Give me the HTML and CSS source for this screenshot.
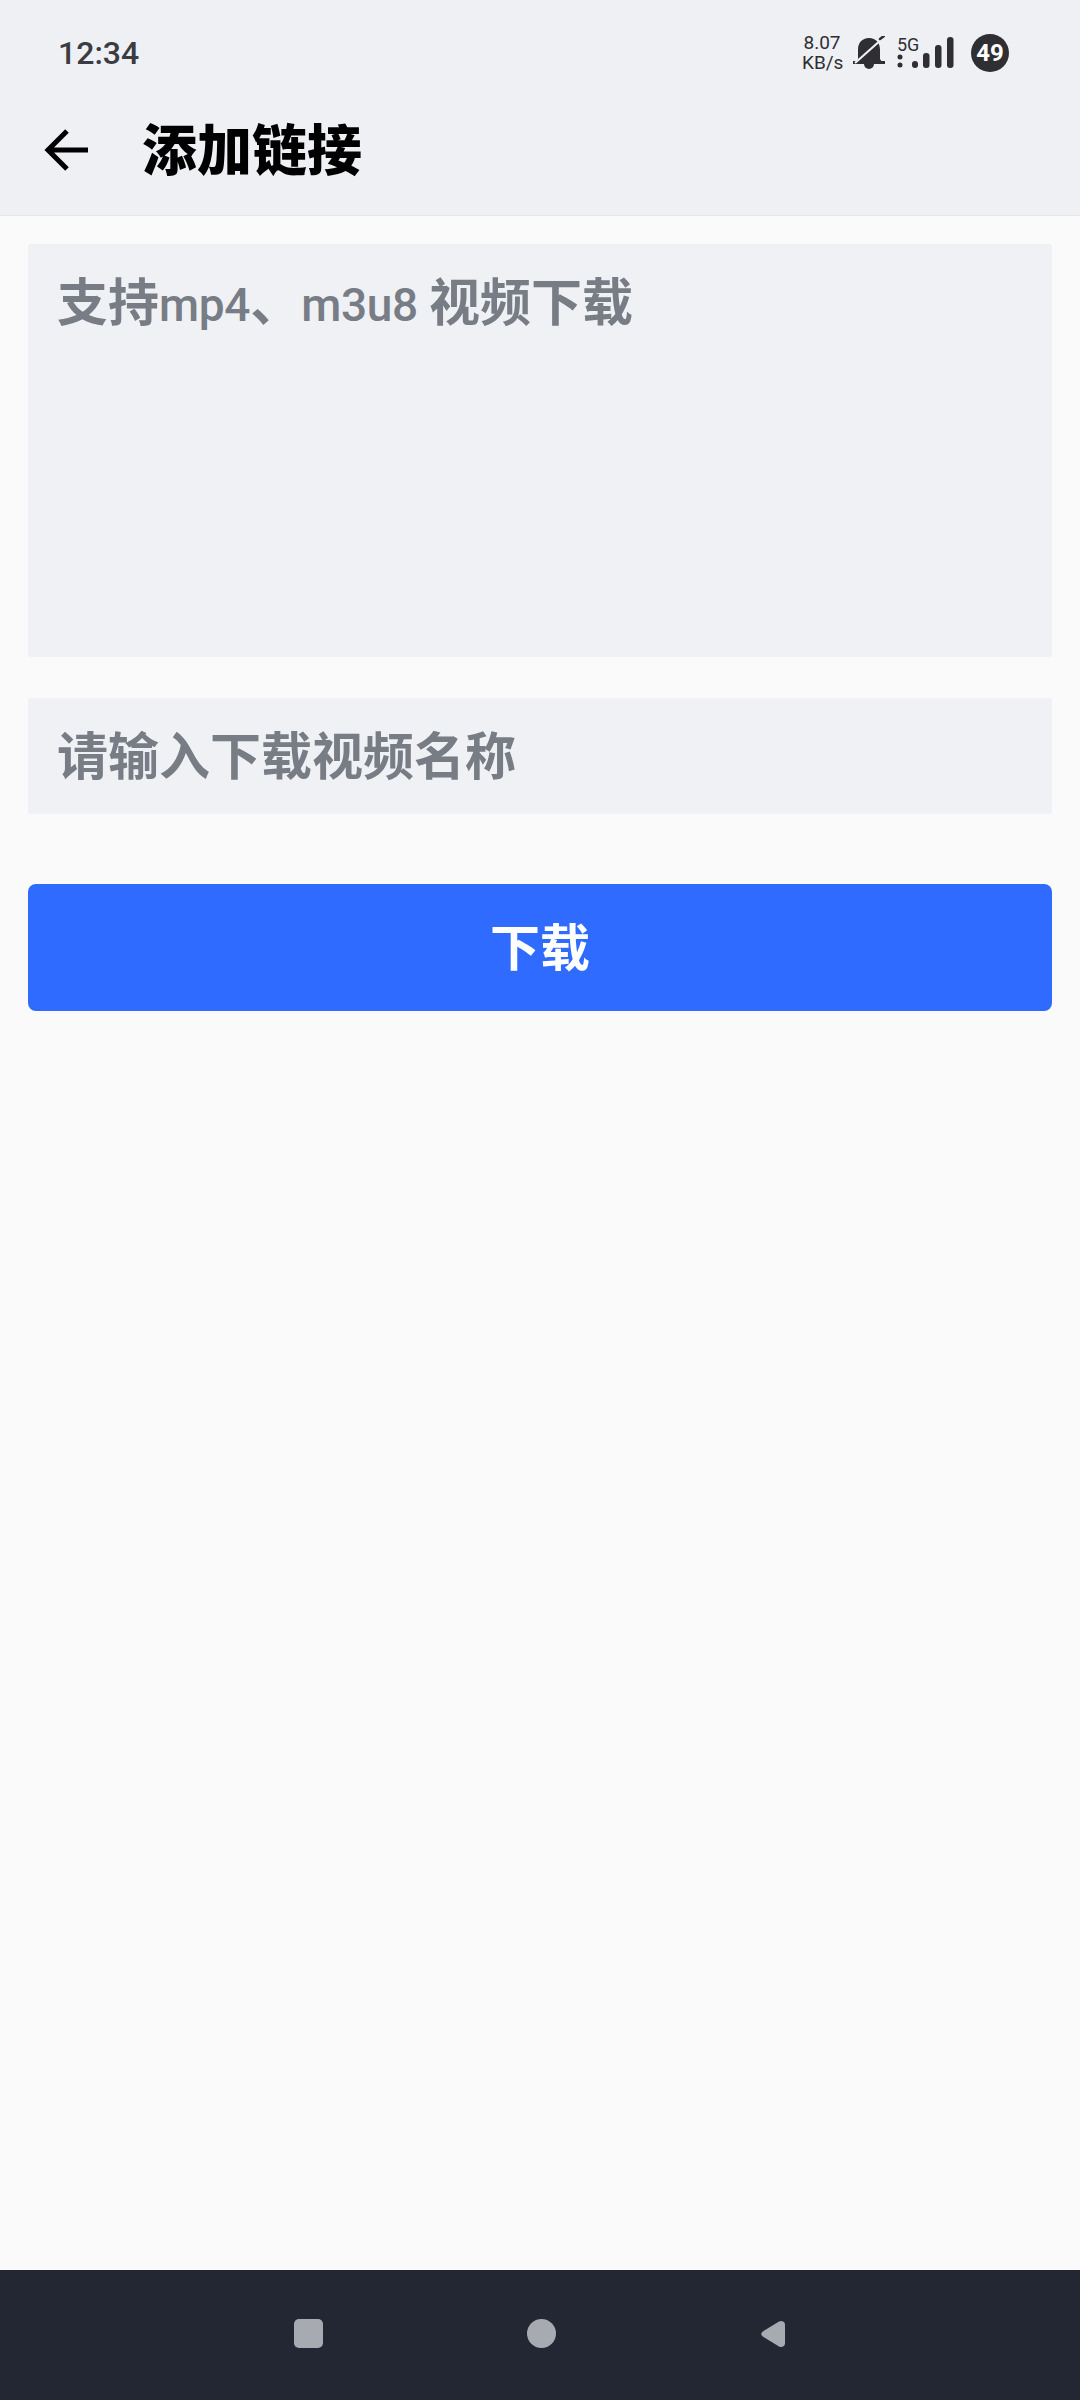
FILE: index.html
```html
<!DOCTYPE html>
<html lang="zh-CN">
<head>
    <meta charset="UTF-8">
    <meta name="viewport" content="width=device-width, initial-scale=1.0">
    <title>添加链接</title>
    <link rel="stylesheet" href="styles.css">
</head>
<body>
    <div class="page">

        <!-- Status bar + title -->
        <header class="top">
            <div class="status-bar">
                <span class="clock">12:34</span>
                <div class="status-icons">
                    <span class="speed">8.07<br>KB/s</span>
                    <svg class="bell" viewBox="0 0 32 34">
                        <path d="M16 2C9 2 5 7 5 13.500V23l-2 3h26l-2-3v-9.500C27 7 23 2 16 2z" fill="#2e2e33"/>
                        <path d="M0 26.500h32" stroke="#2e2e33" stroke-width="3" stroke-linecap="round"/>
                        <path d="M11 28h10a5 5 0 0 1-10 0z" fill="#2e2e33"/>
                        <path d="M2 27L29 3" stroke="#eef0f4" stroke-width="2.200"/>
                        <path d="M27 3L31 0" stroke="#2e2e33" stroke-width="2.500" stroke-linecap="round"/>
                    </svg>
                    <div class="signal">
                        <span class="signal-label">5G</span>
                        <svg class="bars" viewBox="0 0 58 33">
                            <circle cx="3" cy="21" r="2.500" fill="#2e2e33"/>
                            <circle cx="3" cy="29" r="2.500" fill="#2e2e33"/>
                            <rect x="15" y="25" width="6" height="7" rx="3" fill="#2e2e33"/>
                            <rect x="26" y="17" width="6.500" height="15" rx="3" fill="#2e2e33"/>
                            <rect x="38" y="9" width="6.500" height="23" rx="3" fill="#2e2e33"/>
                            <rect x="50" y="1" width="6.500" height="31" rx="3" fill="#2e2e33"/>
                        </svg>
                    </div>
                    <span class="battery">49</span>
                </div>
            </div>
            <div class="title-bar">
                <svg class="back" viewBox="0 0 46 46">
                    <path d="M44 23H4M23 4L4 23l19 19" fill="none" stroke="#000" stroke-width="5"/>
                </svg>
                <h1 class="title">添加链接</h1>
            </div>
        </header>

        <!-- Form -->
        <main class="form">
            <div class="field field-link">支持<span class="latin">mp4</span>、<span class="latin">m3u8 </span>视频下载</div>
            <div class="field field-name">请输入下载视频名称</div>
            <button class="submit" type="button">下载</button>
        </main>

        <!-- Navigation bar -->
        <footer class="nav-bar">
            <span class="nav-square"></span>
            <span class="nav-circle"></span>
            <svg class="nav-back" viewBox="0 0 24 28">
                <path d="M2.500 11L18 1.500c2.500-1.500 6 0 6 3v19c0 3-3.500 4.500-6 3L2.500 17c-3-2-3-4 0-6z" fill="#a7aab0"/>
            </svg>
        </footer>
    </div>
</body>
</html>
```

FILE: styles.css
```css
* {
    box-sizing: border-box;
}

body {
    margin: 0;
    font-family: Roboto, 'Noto Sans CJK SC', sans-serif;
    background-color: #fafafa;
}

.page {
    display: flex;
    flex-direction: column;
    height: 2400px;
}

.top {
    height: 216px;
    background-color: #eef0f4;
    border-bottom: 1px solid #e6e6e9;
}

.status-bar {
    display: flex;
    justify-content: space-between;
    align-items: center;
    height: 105px;
    padding: 0 71px 0 58px;
}

.clock {
    font-size: 32px;
    font-weight: 500;
    color: #3b3b42;
}

.status-icons {
    display: flex;
    align-items: center;
}

.speed {
    font-size: 19px;
    line-height: 20px;
    color: #2e2e33;
    text-align: center;
    width: 40px;
}

.bell {
    width: 32px;
    height: 34px;
    margin-left: 11px;
}

.signal {
    position: relative;
    width: 58px;
    height: 33px;
    margin-left: 12px;
    display: flex;
    align-items: flex-end;
}

.signal-label {
    position: absolute;
    left: 0;
    top: -1px;
    font-size: 18px;
    line-height: 20px;
    color: #2e2e33;
}

.bars {
    width: 58px;
    height: 33px;
}

.battery {
    display: flex;
    justify-content: center;
    align-items: center;
    width: 38px;
    height: 38px;
    margin-left: 16px;
    border-radius: 50%;
    background-color: #2e2e33;
    color: #fff;
    font-size: 24px;
    font-weight: 700;
}

.title-bar {
    display: flex;
    align-items: center;
    height: 90px;
    padding-left: 44px;
}

.back {
    width: 46px;
    height: 46px;
}

.title {
    margin: 2px 0 0 52px;
    font-size: 55px;
    font-weight: 900;
    color: #000;
    line-height: 1;
}

.form {
    flex: 1;
    display: flex;
    flex-direction: column;
    padding: 28px 28px 0;
}

.field {
    background-color: #eff1f5;
    color: #777c85;
    font-size: 51px;
    font-weight: 700;
    padding-left: 29px;
    border-radius: 2px;
}

.latin {
    font-size: 46px;
    font-weight: 500;
    letter-spacing: -0.3px;
}

.field-link {
    height: 413px;
    padding-top: 25px;
    line-height: 70px;
}

.field-name {
    height: 116px;
    margin-top: 41px;
    line-height: 119px;
}

.submit {
    height: 127px;
    margin-top: 70px;
    padding: 0 0 7px;
    border: none;
    border-radius: 8px;
    background-color: #306bff;
    color: #fff;
    font-family: inherit;
    font-size: 50px;
    font-weight: 700;
}

.nav-bar {
    position: relative;
    height: 130px;
    background-color: #222733;
    display: flex;
    justify-content: center;
    align-items: center;
    padding-bottom: 3px;
}

.nav-square {
    width: 29px;
    height: 29px;
    border-radius: 5px;
    background-color: #a7aab0;
    margin-right: 1px;
}

.nav-circle {
    width: 29px;
    height: 29px;
    margin-left: 203px;
    border-radius: 50%;
    background-color: #a7aab0;
}

.nav-back {
    width: 26px;
    height: 28px;
    margin-left: 204px;
}
```
